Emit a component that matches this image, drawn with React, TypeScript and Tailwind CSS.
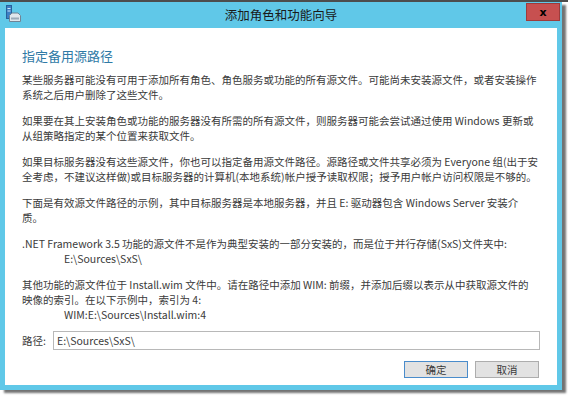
const paragraphs: { lines: string[]; indent?: string }[] = [
  {
    lines: [
      "某些服务器可能没有可用于添加所有角色、角色服务或功能的所有源文件。可能尚未安装源文件，或者安装操作",
      "系统之后用户删除了这些文件。",
    ],
  },
  {
    lines: [
      "如果要在其上安装角色或功能的服务器没有所需的所有源文件，则服务器可能会尝试通过使用 Windows 更新或",
      "从组策略指定的某个位置来获取文件。",
    ],
  },
  {
    lines: [
      "如果目标服务器没有这些源文件，你也可以指定备用源文件路径。源路径或文件共享必须为 Everyone 组(出于安",
      "全考虑，不建议这样做)或目标服务器的计算机(本地系统)帐户授予读取权限；授予用户帐户访问权限是不够的。",
    ],
  },
  {
    lines: [
      "下面是有效源文件路径的示例，其中目标服务器是本地服务器，并且 E: 驱动器包含 Windows Server 安装介",
      "质。",
    ],
  },
  {
    lines: [".NET Framework 3.5 功能的源文件不是作为典型安装的一部分安装的，而是位于并行存储(SxS)文件夹中:"],
    indent: "E:\\Sources\\SxS\\",
  },
  {
    lines: [
      "其他功能的源文件位于 Install.wim 文件中。请在路径中添加 WIM: 前缀，并添加后缀以表示从中获取源文件的",
      "映像的索引。在以下示例中，索引为 4:",
    ],
    indent: "WIM:E:\\Sources\\Install.wim:4",
  },
];

function WizardIcon() {
  return (
    <svg width="15" height="18" viewBox="0 0 15 18">
      <rect x="0.5" y="0.5" width="5" height="13" fill="#3d7fc4" stroke="#27609c" />
      <rect x="1.5" y="3" width="3" height="1" fill="#cfe6fa" />
      <rect x="1.5" y="5.5" width="3" height="1" fill="#cfe6fa" />
      <path d="M3.5 10.5 L6 8 H12 L14.5 10.5 V16.5 H3.5 Z" fill="#dfe6ec" stroke="#6f8496" />
      <rect x="5" y="12.5" width="8" height="2" fill="#9aaab8" />
    </svg>
  );
}

export default function App() {
  return (
    <div
      className="relative h-[396px] w-[568px] overflow-hidden bg-white text-[#3a3a3a]"
      style={{ fontFamily: '"Noto Sans CJK SC", "Noto Sans", sans-serif' }}
    >
      <div className="h-[2px] bg-[#4d4d4d]" />
      <div className="relative flex h-[388px] w-[562px] flex-col bg-[#60c8e8] shadow-[4px_3px_2px_rgba(0,0,0,0.55)]">
        <div className="relative flex h-[26px] items-center justify-center">
          <div className="absolute left-[6px] top-[3px]">
            <WizardIcon />
          </div>
          <span className="text-[12.5px] leading-none text-[#1a1a1a]">添加角色和功能向导</span>
          <div className="absolute left-[526px] top-[1px] flex h-[18px] w-[34px] items-center justify-center border border-[#9e3b3b] bg-[#c75050]">
            <span className="text-[11px] font-bold leading-none text-black" style={{ fontFamily: '"DejaVu Sans", sans-serif' }}>
              x
            </span>
          </div>
        </div>

        <div className="mx-[5px] flex h-[357px] flex-col bg-white px-[17px] pt-[19px]">
          <h1 className="text-[13px] leading-[18px] text-[#2f7aa6]">指定备用源路径</h1>

          <div className="mt-[7px] flex flex-col gap-[11px] text-[10.5px] leading-[15px]">
            {paragraphs.map((p, i) => (
              <div key={i}>
                {p.lines.map((line) => (
                  <div key={line} className="whitespace-nowrap">
                    {line}
                  </div>
                ))}
                {p.indent && <div className="whitespace-nowrap pl-[42px]">{p.indent}</div>}
              </div>
            ))}
          </div>

          <div className="mt-[9px] flex items-center gap-[5px] text-[10.5px]">
            <span className="w-[26px]">路径:</span>
            <div className="flex h-[19px] w-[488px] items-center border border-[#b8b8b8] px-[3px]">
              E:\Sources\SxS\
            </div>
          </div>

          <div className="mt-[11px] flex justify-end gap-[7px] pr-[1px] text-[10.5px]">
            <button className="flex h-[17px] w-[64px] items-center justify-center border border-[#4a8ccb] bg-[#e2e2e2]">
              确定
            </button>
            <button className="flex h-[17px] w-[64px] items-center justify-center border border-[#adadad] bg-[#e2e2e2]">
              取消
            </button>
          </div>
        </div>
      </div>
    </div>
  );
}
